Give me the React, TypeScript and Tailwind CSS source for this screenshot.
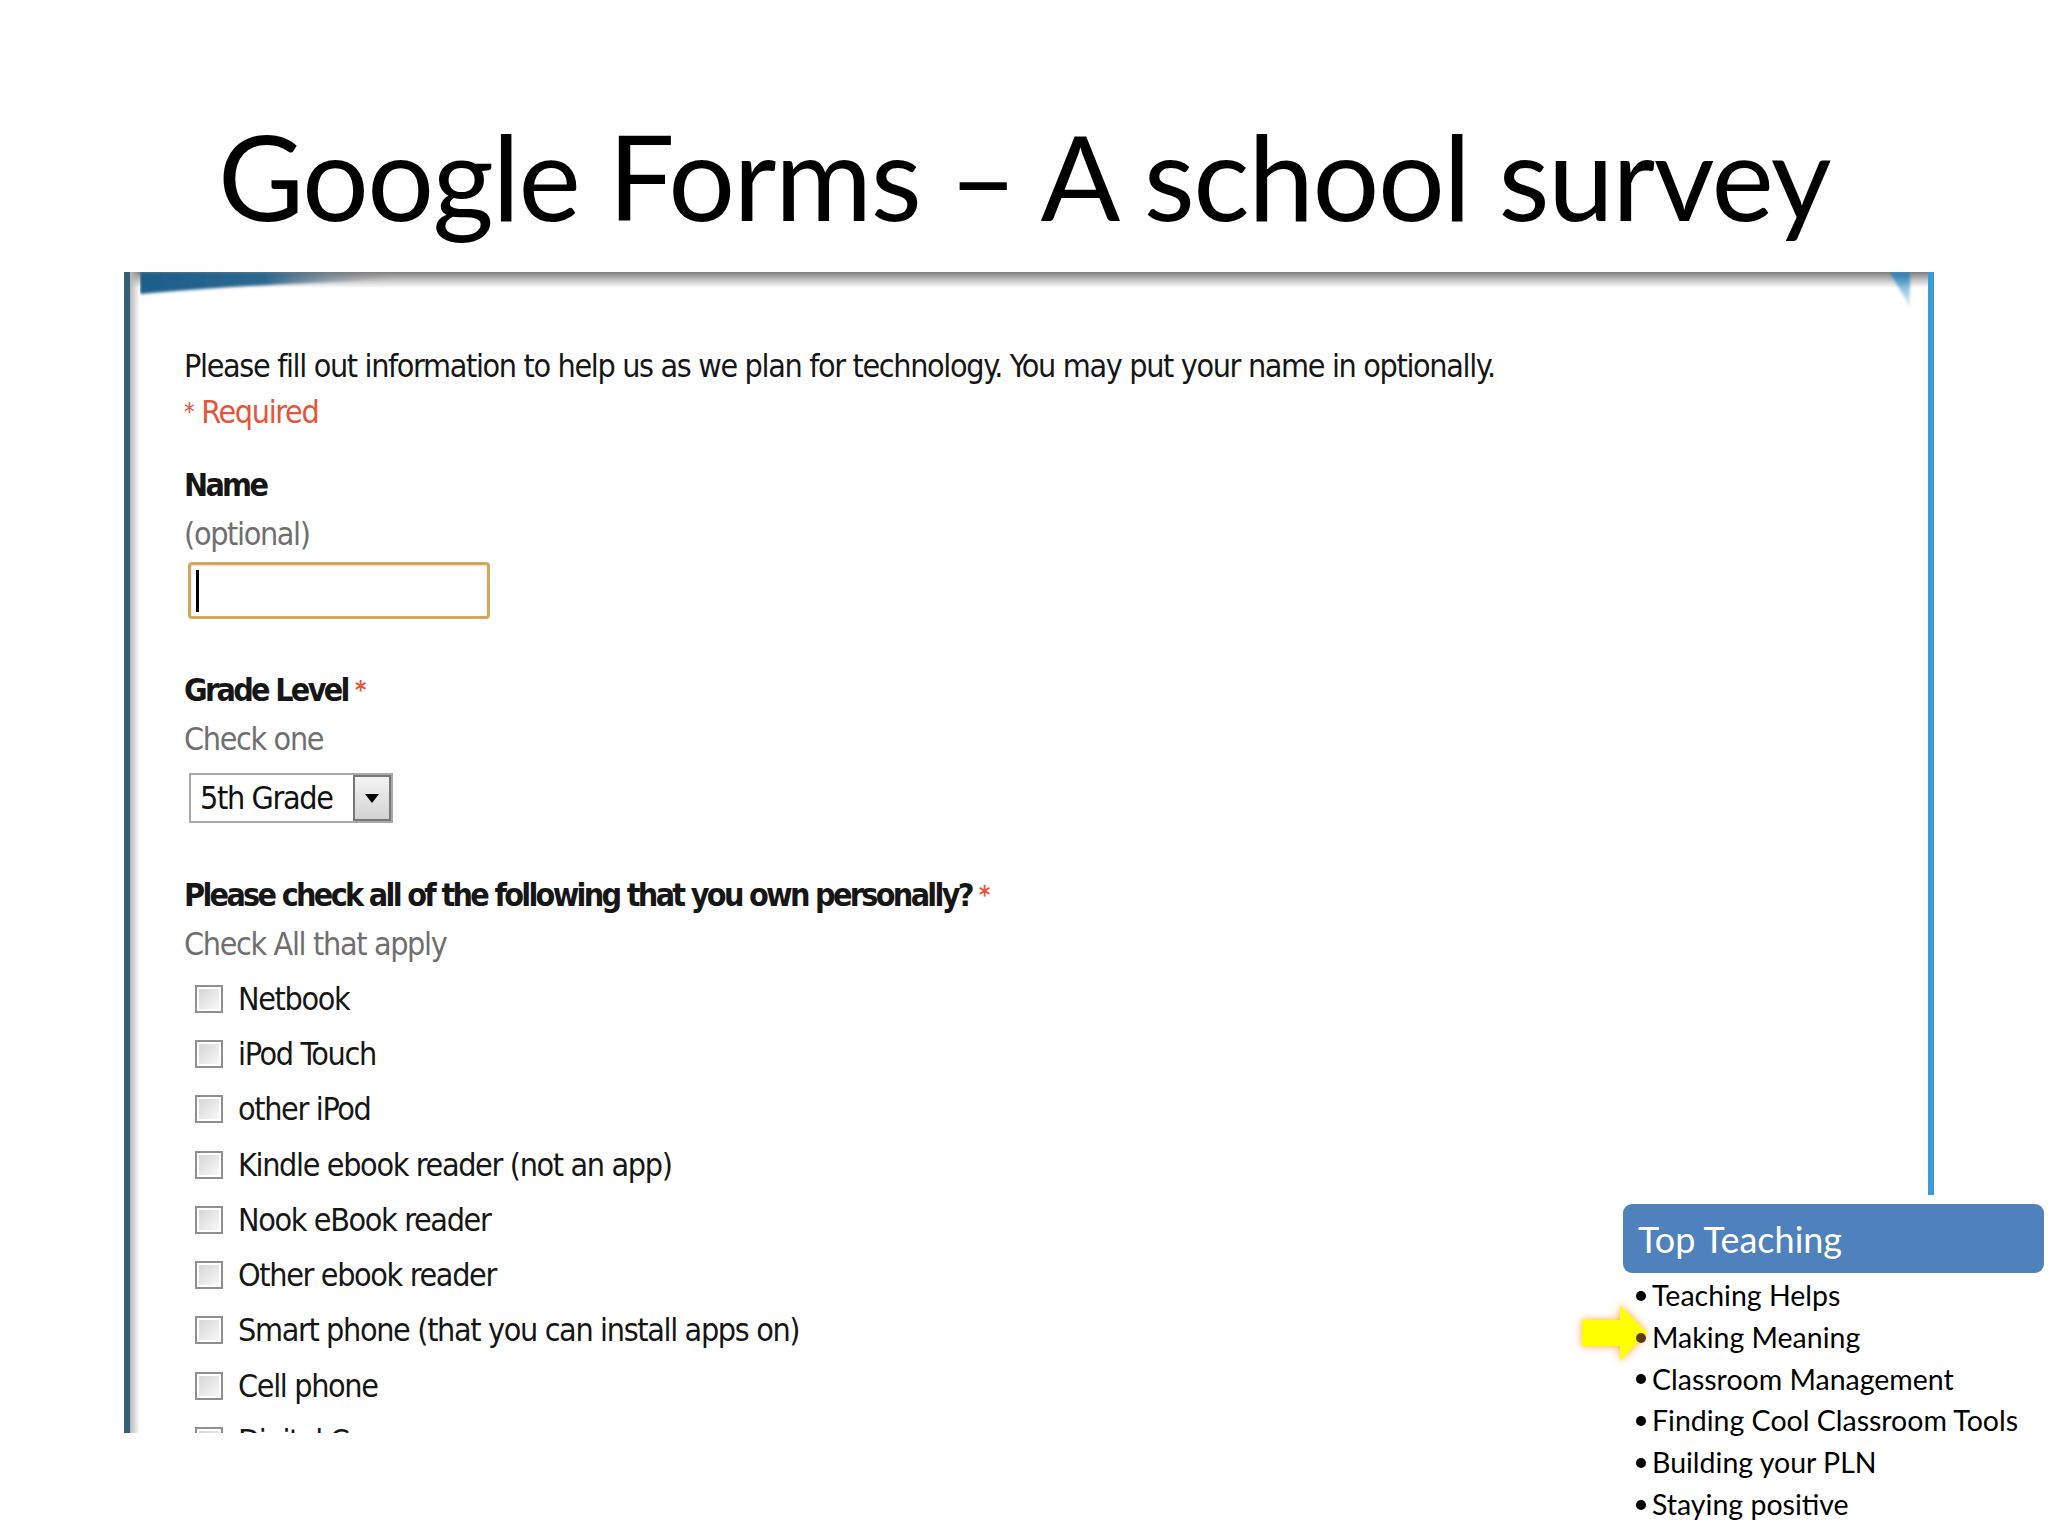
import React from "react";

const formFont = "font-['Liberation_Sans_Narrow','DejaVu_Sans_Condensed','Liberation_Sans',sans-serif]";

function Checkbox() {
  return (
    <div className="w-[28px] h-[28px] border-2 border-[#8f8f8f] bg-white p-[2px] shrink-0">
      <div className="w-full h-full bg-gradient-to-br from-[#d6d6d6] to-[#f8f8f8]" />
    </div>
  );
}

const items = [
  "Netbook",
  "iPod Touch",
  "other iPod",
  "Kindle ebook reader (not an app)",
  "Nook eBook reader",
  "Other ebook reader",
  "Smart phone (that you can install apps on)",
  "Cell phone",
  "Digital Camera",
];

const bullets = [
  "Teaching Helps",
  "Making Meaning",
  "Classroom Management",
  "Finding Cool Classroom Tools",
  "Building your PLN",
  "Staying positive",
];

export default function App() {
  return (
    <div className="w-[2048px] h-[1536px] bg-white relative overflow-hidden">
      <h1 className="font-['Lato',sans-serif] text-[118px] leading-none text-black text-center pt-[117px] h-[235px] font-normal tracking-[-1.5px]">
        Google Forms – A school survey
      </h1>

      <div className="mt-[37px] ml-[124px] w-[1810px] h-[1161px] relative overflow-hidden bg-white border-l-[6px] border-l-[#2e6079] border-r-[6px] border-r-[#3b9bd5]">
        {/* top shadow bar */}
        <div className="absolute left-0 right-0 top-0 h-[16px] bg-gradient-to-b from-[#7e7e7e] via-[#c4c4c4] to-transparent" />
        {/* left inner shadow */}
        <div className="absolute left-0 top-0 bottom-0 w-[10px] bg-gradient-to-r from-[#b8b8b8] to-transparent" />
        {/* left swoosh */}
        <svg className="absolute left-[10px] top-0" width="250" height="28" viewBox="0 0 250 28">
          <defs>
            <linearGradient id="sw" x1="0" y1="0" x2="1" y2="0">
              <stop offset="0" stopColor="#1d5d8a" />
              <stop offset="0.5" stopColor="#2b6891" />
              <stop offset="1" stopColor="#7e7e7e" stopOpacity="0" />
            </linearGradient>
            <filter id="blur1" x="-10%" y="-50%" width="120%" height="200%">
              <feGaussianBlur stdDeviation="1.5" />
            </filter>
          </defs>
          <path d="M0 0 L250 0 L250 8 C170 10 80 15 0 22 Z" fill="url(#sw)" filter="url(#blur1)" />
        </svg>
        {/* right corner */}
        <svg className="absolute right-[12px] top-0" width="28" height="40" viewBox="0 0 28 40">
          <defs>
            <linearGradient id="rc" x1="0" y1="0" x2="0" y2="1">
              <stop offset="0" stopColor="#2a7fb8" />
              <stop offset="1" stopColor="#7fbfe6" stopOpacity="0.2" />
            </linearGradient>
            <filter id="blur2" x="-50%" y="-20%" width="200%" height="140%">
              <feGaussianBlur stdDeviation="1.5" />
            </filter>
          </defs>
          <path d="M2 0 L22 0 L22 36 C15 22 8 12 2 0 Z" fill="url(#rc)" filter="url(#blur2)" />
        </svg>

        <div className={`${formFont} relative pl-[54px] pt-[71px] text-[32px] leading-[46px] text-[#161616] tracking-[-1.35px]`}>
          <div>Please fill out information to help us as we plan for technology. You may put your name in optionally.</div>
          <div className="text-[#e4553c]">
            <span className="text-[24px] align-top">*</span> Required
          </div>

          <div className="mt-[27px] font-bold tracking-[-2.7px]">Name</div>
          <div className="mt-[3px] text-[#6f6f6f]">(optional)</div>
          <div className="mt-[5px] ml-[4px] w-[302px] h-[57px] border-[3px] border-[#d6a757] rounded-[4px] bg-white flex items-center pl-[5px] shadow-[inset_0_1px_2px_rgba(0,0,0,0.15)]">
            <div className="w-[3px] h-[42px] bg-black" />
          </div>

          <div className="mt-[48px] font-bold tracking-[-2.7px]">
            Grade Level <span className="text-[#e4553c] align-top text-[24px] tracking-normal">*</span>
          </div>
          <div className="mt-[3px] text-[#6f6f6f]">Check one</div>
          <div className="mt-[11px] ml-[5px] w-[204px] h-[50px] border-2 border-[#a8a8a8] bg-white flex">
            <div className="flex-1 pl-[9px] flex items-center text-[#111]">5th Grade</div>
            <div className="w-[38px] h-full border-2 border-[#777] bg-gradient-to-b from-[#f4f4f4] to-[#d2d2d2] flex items-center justify-center">
              <svg width="14" height="9" viewBox="0 0 14 9">
                <path d="M0 0 L14 0 L7 9 Z" fill="#000" />
              </svg>
            </div>
          </div>

          <div className="mt-[49px] font-bold tracking-[-2.7px]">
            Please check all of the following that you own personally?{" "}
            <span className="text-[#e4553c] align-top text-[24px] tracking-normal">*</span>
          </div>
          <div className="mt-[3px] text-[#6f6f6f]">Check All that apply</div>

          <div className="mt-[4px] flex flex-col">
            {items.map((t) => (
              <div key={t} className="h-[55.3px] flex items-center pl-[11px] gap-[15px]">
                <Checkbox />
                <span>{t}</span>
              </div>
            ))}
          </div>
        </div>
      </div>

      {/* Sidebar overlay */}
      <div className="absolute left-[1575px] top-[1195px] w-[473px] h-[341px] bg-white font-['Lato',sans-serif]">
        <svg
          className="absolute left-[7px] top-[110px] drop-shadow-[0_0_4px_#f7a83a]"
          width="66"
          height="56"
          viewBox="0 0 66 56"
        >
          <path d="M0 15 L38 15 L38 0 L65 28 L38 56 L38 41 L0 41 Z" fill="#ffff00" />
        </svg>
        <div className="relative mt-[9px] ml-[48px] w-[421px] h-[69px] rounded-[9px] bg-[#4f81bd] flex items-center pl-[15px] text-white text-[36px]">
          Top Teaching
        </div>
        <ul className="relative mt-[2px] ml-[61px] text-[28.5px] leading-[41.8px] text-black">
          {bullets.map((b, i) => (
            <li key={b} className="flex items-center">
              <span className="w-[16px] h-[41.8px] flex items-center">
                <span className={`w-[10px] h-[10px] rounded-full ${i === 1 ? "bg-[#5a3a10]" : "bg-black"}`} />
              </span>
              <span>{b}</span>
            </li>
          ))}
        </ul>
      </div>
    </div>
  );
}
